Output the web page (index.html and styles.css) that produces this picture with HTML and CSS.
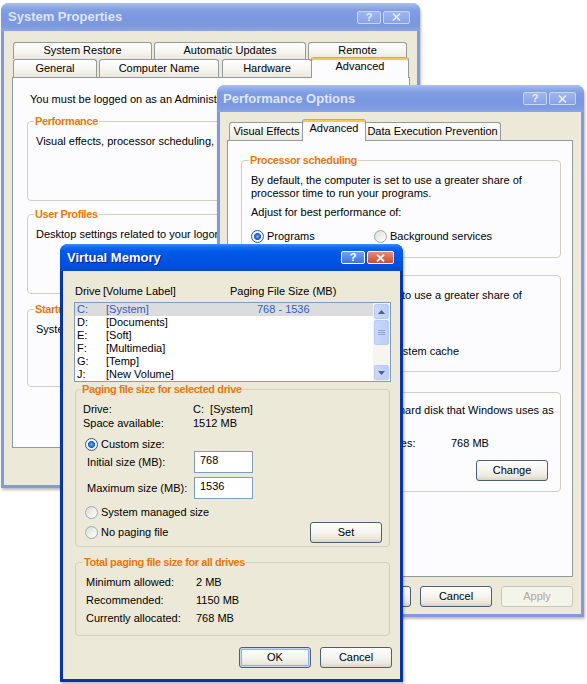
FILE: index.html
```html
<!DOCTYPE html>
<html>
<head>
<meta charset="utf-8">
<title>System Properties</title>
<link rel="stylesheet" href="styles.css">
</head>
<body>
<div class="desk">

  <!-- System Properties (inactive, back) -->
  <div class="win inactive w-sp">
    <div class="tb">
      <span class="ttl">System Properties</span>
      <span class="tbtns">
        <span class="tbtn help">?</span>
        <span class="tbtn close"><svg width="9" height="8" viewBox="0 0 9 8"><path d="M1 0.5L8 7.5M8 0.5L1 7.5" stroke="currentColor" stroke-width="1.7"/></svg></span>
      </span>
    </div>
    <div class="client">
      <div class="tabs-sp">
        <div class="tabrow r1">
          <div class="tab t-sr">System Restore</div>
          <div class="tab t-au">Automatic Updates</div>
          <div class="tab t-re">Remote</div>
        </div>
        <div class="tabrow r2">
          <div class="tab t-ge">General</div>
          <div class="tab t-cn">Computer Name</div>
          <div class="tab t-hw">Hardware</div>
          <div class="tab sel t-ad">Advanced</div>
        </div>
      </div>
      <div class="panel p-sp">
        <p class="intro">You must be logged on as an Administrator to make most of these changes.</p>
        <div class="group g-sp g-perf">
          <div class="gl">Performance</div>
          <p class="gtext">Visual effects, processor scheduling, memory usage, and virtual memory</p>
        </div>
        <div class="group g-sp g-up">
          <div class="gl">User Profiles</div>
          <p class="gtext">Desktop settings related to your logon</p>
        </div>
        <div class="group g-sp g-st">
          <div class="gl">Startup and Recovery</div>
          <p class="gtext">System startup, system failure, and debugging information</p>
        </div>
      </div>
    </div>
  </div>

  <!-- Performance Options (inactive, middle) -->
  <div class="win inactive w-po">
    <div class="tb">
      <span class="ttl">Performance Options</span>
      <span class="tbtns">
        <span class="tbtn help">?</span>
        <span class="tbtn close"><svg width="9" height="8" viewBox="0 0 9 8"><path d="M1 0.5L8 7.5M8 0.5L1 7.5" stroke="currentColor" stroke-width="1.7"/></svg></span>
      </span>
    </div>
    <div class="client">
      <div class="tabrow tabs-po">
        <div class="tab t-ve">Visual Effects</div>
        <div class="tab sel t-pa">Advanced</div>
        <div class="tab t-dep">Data Execution Prevention</div>
      </div>
      <div class="panel p-po">
        <div class="group g-po g-proc">
          <div class="gl">Processor scheduling</div>
          <p class="gt1">By default, the computer is set to use a greater share of<br>processor time to run your programs.</p>
          <p class="gt2">Adjust for best performance of:</p>
          <div class="rrow">
            <div class="radio rc1"><span class="rb on"></span>Programs</div>
            <div class="radio"><span class="rb"></span>Background services</div>
          </div>
        </div>
        <div class="group g-po g-mem">
          <div class="gl gl-empty"></div>
          <p class="gt1">By default, the computer is set to use a greater share of</p>
          <div class="rrow mem-rrow">
            <div class="radio rc1"><span class="rb on"></span></div>
            <div class="radio"><span class="rb"></span>System cache</div>
          </div>
        </div>
        <div class="group g-po g-vmem">
          <div class="gl gl-empty"></div>
          <p class="gt1 vm1">A paging file is an area on the hard disk that Windows uses as</p>
          <div class="kvp"><span class="kp">Total paging file size for all drives:</span><span>768 MB</span></div>
          <div class="chg"><div class="btn b-chg">Change</div></div>
        </div>
      </div>
      <div class="btnrow po-btns">
        <div class="btn">OK</div>
        <div class="btn">Cancel</div>
        <div class="btn dis">Apply</div>
      </div>
    </div>
  </div>

  <!-- Virtual Memory (active, front) -->
  <div class="win active w-vm">
    <div class="tb">
      <span class="ttl">Virtual Memory</span>
      <span class="tbtns">
        <span class="tbtn help">?</span>
        <span class="tbtn close"><svg width="9" height="8" viewBox="0 0 9 8"><path d="M1 0.5L8 7.5M8 0.5L1 7.5" stroke="currentColor" stroke-width="1.8"/></svg></span>
      </span>
    </div>
    <div class="client c-vm">
      <div class="lhdr"><span class="lh-d">Drive</span><span class="lh-l">[Volume Label]</span><span>Paging File Size (MB)</span></div>
      <div class="lbox">
        <div class="lrows">
          <div class="lrow sel"><span class="c1">C:</span><span class="c2">[System]</span><span>768 - 1536</span></div>
          <div class="lrow"><span class="c1">D:</span><span class="c2">[Documents]</span></div>
          <div class="lrow"><span class="c1">E:</span><span class="c2">[Soft]</span></div>
          <div class="lrow"><span class="c1">F:</span><span class="c2">[Multimedia]</span></div>
          <div class="lrow"><span class="c1">G:</span><span class="c2">[Temp]</span></div>
          <div class="lrow"><span class="c1">J:</span><span class="c2">[New Volume]</span></div>
        </div>
        <div class="sbar">
          <div class="sbb"><div class="sbb-in"><svg width="7" height="4" viewBox="0 0 7 4"><path d="M0 4L3.5 0L7 4Z" fill="#4d6185"/></svg></div></div>
          <div class="track">
            <div class="thumb"><svg width="7" height="7" viewBox="0 0 7 7"><path d="M0 1.5H7M0 3.5H7M0 5.5H7" stroke="#8aa2d8" stroke-width="1"/></svg></div>
          </div>
          <div class="sbb"><div class="sbb-in"><svg width="7" height="4" viewBox="0 0 7 4"><path d="M0 0L3.5 4L7 0Z" fill="#4d6185"/></svg></div></div>
        </div>
      </div>

      <div class="group g-vm g-psel">
        <div class="gl">Paging file size for selected drive</div>
        <div class="kv first"><span class="k">Drive:</span><span>C:&nbsp;&nbsp;[System]</span></div>
        <div class="kv"><span class="k">Space available:</span><span>1512 MB</span></div>
        <div class="radio r-custom"><span class="rb on"></span>Custom size:</div>
        <div class="field"><span class="fk">Initial size (MB):</span><div class="inp">768</div></div>
        <div class="field f-max"><span class="fk">Maximum size (MB):</span><div class="inp">1536</div></div>
        <div class="radio r-sys"><span class="rb"></span>System managed size</div>
        <div class="setrow">
          <div class="radio"><span class="rb"></span>No paging file</div>
          <div class="btn b-set">Set</div>
        </div>
      </div>

      <div class="group g-vm g-tot">
        <div class="gl">Total paging file size for all drives</div>
        <div class="kv2 first"><span class="k2">Minimum allowed:</span><span>2 MB</span></div>
        <div class="kv2"><span class="k2">Recommended:</span><span>1150 MB</span></div>
        <div class="kv2"><span class="k2">Currently allocated:</span><span>768 MB</span></div>
      </div>

      <div class="btnrow vm-btns">
        <div class="btn def">OK</div>
        <div class="btn b-cancel">Cancel</div>
      </div>
    </div>
  </div>

</div>
</body>
</html>
```

FILE: styles.css
```css
* { box-sizing: border-box; }
body {
  margin: 0;
  background: #fff;
  font: 11px/13px "Liberation Sans", Arial, sans-serif;
  color: #000;
}
p { margin: 0; }

.desk {
  position: relative;
  width: 587px;
  height: 684px;
  overflow: hidden;
}

/* ---------- windows ---------- */
.win {
  position: absolute;
  display: flex;
  flex-direction: column;
  border-radius: 8px 8px 0 0;
  box-shadow: 1px 2px 3px rgba(0, 0, 0, 0.28);
}
.win.inactive { background: #8299dd; }
.win.active { background: #0a33a8; }

.w-sp { left: 1px; top: 3px; width: 419px; height: 485px; }
.w-po { left: 217px; top: 85px; width: 367px; height: 532px; }
.w-vm { left: 60px; top: 244px; width: 343px; height: 438px; }

.tb {
  flex: none;
  height: 27px;
  border-radius: 8px 8px 0 0;
  display: flex;
  align-items: center;
  justify-content: space-between;
  padding: 0 9px 0 7px;
}
.w-sp .tb { height: 28px; padding-right: 10px; }
.w-po .tb { padding-left: 6px; padding-right: 8px; }

.inactive .tb {
  background: linear-gradient(#adc2f2 0, #94afea 3px, #809ce2 8px, #7b97e0 60%, #7e9ae1 85%, #8ca5e6 100%);
}
.active .tb {
  background: linear-gradient(#3d8ffc 0, #166cf2 3px, #0059e7 8px, #0054e3 55%, #0050d9 85%, #0a48c4 100%);
}
.ttl {
  font: bold 13px/16px "Liberation Sans", Arial, sans-serif;
  white-space: nowrap;
}
.inactive .ttl { color: #dde6f9; }
.active .ttl { color: #fff; text-shadow: 1px 1px #0a1a86; }

.tbtns { display: flex; gap: 2px; }
.tbtn {
  height: 13px;
  border: 1px solid #fff;
  border-radius: 2px;
  display: flex;
  align-items: center;
  justify-content: center;
  color: #fff;
  font: bold 11px/11px "Liberation Sans", Arial, sans-serif;
}
.tbtn.help { width: 24px; }
.tbtn.close { width: 27px; }
.inactive .tbtn {
  background: linear-gradient(#9fb6ee, #88a3e6);
  border-color: #c9d6f5;
  color: #e6ecfb;
}
.active .tbtn.help { background: linear-gradient(#74a2f2, #3d74e0); }
.active .tbtn.close { background: linear-gradient(#ec8b70, #d24a2e); }

.client {
  flex: 1;
  min-height: 0;
  margin: 0 3px 3px;
  background: #ece9d8;
  overflow: hidden;
}

/* ---------- tabs ---------- */
.tabrow { display: flex; align-items: flex-end; }
.tab {
  flex: none;
  height: 18px;
  border: 1px solid #919b9c;
  border-bottom: 0;
  border-radius: 3px 3px 0 0;
  background: linear-gradient(#ffffff, #f7f6f1 50%, #eae8df);
  text-align: center;
  white-space: nowrap;
  line-height: 16px;
}

.tabs-sp { margin: 11px 0 0 8px; padding-left: 1px; }
.r1 { height: 17px; }
.r1 .tab { height: 17px; line-height: 15px; }
.r2 { height: 18px; position: relative; z-index: 1; }
.t-sr { width: 139px; }
.t-au { width: 152px; margin-left: 2px; }
.t-re { width: 99px; margin-left: 2px; }
.t-ge { width: 84px; }
.t-cn { width: 120px; margin-left: 2px; }
.t-hw { width: 90px; margin-left: 3px; }
.t-ad { width: 98px; margin-left: -1px; }

.tabs-po { height: 21px; margin: 7px 0 0 7px; padding-left: 2px; }
.t-ve { width: 75px; }
.t-pa { width: 64px; }
.t-dep { width: 137px; }

.tabrow .tab.sel {
  position: relative;
  z-index: 2;
  height: 21px;
  margin-bottom: -1px;
  background: #fcfcfe;
  border-top-color: #e2a04a;
  box-shadow: inset 0 2px #fdc849;
  padding-top: 1px;
  line-height: 15px;
}
.tabs-po .tab.sel { height: 22px; margin: 0 -2px -1px; }

.panel {
  background: #fcfcfe;
  border: 1px solid #919b9c;
}
.p-sp { margin-left: 8px; width: 398px; height: 371px; padding: 15px 0 0 14px; }
.p-po { margin-left: 7px; width: 346px; height: 437px; padding: 19px 0 0 13px; }

.intro { padding-left: 3px; white-space: nowrap; }

/* ---------- group boxes ---------- */
.group {
  border: 1px solid #d0d0bf;
  border-radius: 4px;
  white-space: nowrap;
}
.gl {
  width: max-content;
  margin: -7px 0 0 -2px;
  padding: 0 1px;
  font-weight: bold;
  color: #e8780e;
  letter-spacing: -0.4px;
  line-height: 13px;
  background: #fcfcfe;
}
.gl.gl-empty { width: 80px; height: 13px; }

.g-sp { width: 370px; padding-left: 8px; }
.g-perf { margin-top: 15px; height: 80px; }
.g-up { margin-top: 13px; height: 80px; }
.g-st { margin-top: 15px; height: 78px; }
.gtext { margin-top: 7px; }

.g-po { width: 320px; padding-left: 9px; }
.g-proc { height: 98px; }
.g-mem { margin-top: 17px; height: 97px; }
.g-vmem { margin-top: 20px; height: 100px; }
.gt1 { margin-top: 7px; }
.gt1.vm1 { margin-top: 5px; }
.gt2 { margin-top: 6px; }
.rrow { display: flex; margin-top: 10px; }
.rrow.mem-rrow { margin-top: 42px; }
.rc1 { width: 123px; }
.kvp { display: flex; margin-top: 20px; }
.kp { width: 200px; }
.chg { display: flex; justify-content: flex-end; margin-top: 10px; padding-right: 12px; }
.b-chg { width: 71px; }

/* ---------- radio ---------- */
.radio { display: flex; align-items: center; gap: 3px; height: 14px; }
.rb {
  flex: none;
  width: 13px;
  height: 13px;
  border-radius: 50%;
  border: 1px solid #9ea9b4;
  background: linear-gradient(135deg, #dcdcd5, #ffffff);
}
.rb.on {
  border-color: #2d5c92;
  background: radial-gradient(circle, #7ab6f6 0, #2c70d8 2.2px, #2262c6 3.2px, #ffffff 3.9px, #f0f0ea 5.5px);
}

/* ---------- virtual memory ---------- */
.c-vm { padding: 14px 8px 0 11px; }
.lhdr { display: flex; padding-left: 1px; white-space: nowrap; }
.lh-d { width: 28px; }
.lh-l { width: 127px; }

.lbox {
  margin-top: 4px;
  width: 317px;
  height: 80px;
  border: 1px solid #7f9db9;
  background: #fff;
  display: flex;
}
.lrows { flex: 1; }
.lrow { display: flex; height: 13px; line-height: 13px; padding-left: 2px; white-space: nowrap; }
.lrow.sel { background: #dcdcdc; color: #2f5fc6; }
.c1 { width: 29px; }
.c2 { width: 151px; }

.sbar {
  flex: none;
  width: 17px;
  display: flex;
  flex-direction: column;
  background: #f6f5f0;
}
.sbb { height: 17px; padding: 1px; }
.sbb-in, .thumb {
  height: 100%;
  border: 1px solid #b8caf5;
  border-radius: 2px;
  background: linear-gradient(90deg, #cad8fb, #bccdf8);
  display: flex;
  align-items: center;
  justify-content: center;
}
.track { flex: 1; padding: 0 1px; }
.thumb { height: 25px; }

.g-vm { margin-left: 1px; width: 315px; }
.g-vm .gl { background: #ece9d8; }
.g-psel { margin-top: 7px; height: 158px; padding: 0 7px; }
.kv { display: flex; line-height: 14px; }
.kv.first { margin-top: 6px; }
.k { width: 110px; }
.r-custom { margin-top: 7px; padding-left: 2px; }
.field { display: flex; align-items: center; height: 22px; padding-left: 4px; }
.f-max { margin-top: 4px; }
.fk { width: 107px; }
.inp {
  width: 59px;
  height: 22px;
  border: 1px solid #7f9db9;
  background: #fff;
  padding: 2px 0 0 5px;
  line-height: 13px;
}
.r-sys { margin-top: 6px; padding-left: 2px; }
.setrow {
  margin-top: 3px;
  height: 21px;
  display: flex;
  align-items: center;
  justify-content: space-between;
  padding-left: 2px;
}
.b-set { width: 73px; }

.g-tot { margin-top: 15px; height: 74px; padding-left: 10px; }
.g-tot .gl { margin-left: -3px; }
.kv2 { display: flex; line-height: 18px; }
.kv2.first { margin-top: 4px; }
.k2 { width: 110px; }

/* ---------- buttons ---------- */
.btnrow { display: flex; justify-content: flex-end; gap: 9px; }
.vm-btns { margin-top: 11px; }
.po-btns { margin-top: 9px; padding-right: 8px; }
.b-cancel { width: 73px; }
.btn {
  flex: none;
  width: 72px;
  height: 21px;
  border: 1px solid #4c5f76;
  border-radius: 3px;
  background: linear-gradient(#ffffff 0, #f6f5f0 45%, #ebe8de 80%, #d9d4c6 100%);
  text-align: center;
  line-height: 19px;
  white-space: nowrap;
}
.btn.def { box-shadow: inset 0 0 0 1px #c4d9f7, inset 0 0 0 2px #8fb1ea; }
.btn.dis {
  border-color: #c9c7ba;
  color: #aca899;
  background: #f5f4ea;
}
```
